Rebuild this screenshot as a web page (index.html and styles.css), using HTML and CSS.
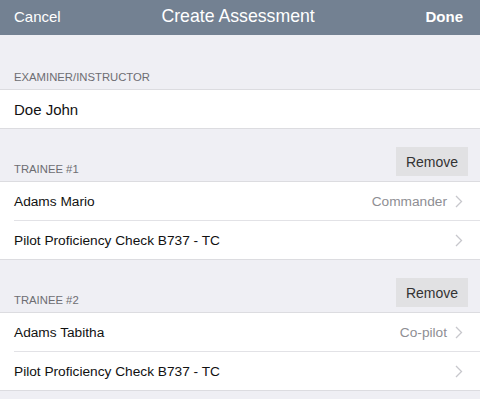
FILE: index.html
```html
<!DOCTYPE html>
<html lang="en">
<head>
    <meta charset="UTF-8">
    <meta name="viewport" content="width=device-width, initial-scale=1.0">
    <title>Create Assessment</title>
    <link rel="stylesheet" href="styles.css">
</head>
<body>
    <header class="nav-bar">
        <span class="nav-btn">Cancel</span>
        <span class="nav-title">Create Assessment</span>
        <span class="nav-btn nav-done">Done</span>
    </header>

    <section class="group">
        <div class="group-head group-head-first">
            <span class="group-label">EXAMINER/INSTRUCTOR</span>
        </div>
        <ul class="table">
            <li class="cell cell-large"><span class="cell-title">Doe John</span></li>
        </ul>
    </section>

    <section class="group">
        <div class="group-head">
            <span class="group-label">TRAINEE #1</span>
            <button class="remove-btn">Remove</button>
        </div>
        <ul class="table">
            <li class="cell">
                <span class="cell-title">Adams Mario</span>
                <span class="cell-detail">Commander</span>
                <svg class="chevron" width="8" height="13" viewBox="0 0 8 13"><path d="M1 1 L6.5 6.5 L1 12" fill="none" stroke="#c7c7cc" stroke-width="1.3"/></svg>
            </li>
            <li class="cell">
                <span class="cell-title">Pilot Proficiency Check B737 - TC</span>
                <svg class="chevron" width="8" height="13" viewBox="0 0 8 13"><path d="M1 1 L6.5 6.5 L1 12" fill="none" stroke="#c7c7cc" stroke-width="1.3"/></svg>
            </li>
        </ul>
    </section>

    <section class="group">
        <div class="group-head">
            <span class="group-label">TRAINEE #2</span>
            <button class="remove-btn">Remove</button>
        </div>
        <ul class="table">
            <li class="cell">
                <span class="cell-title">Adams Tabitha</span>
                <span class="cell-detail">Co-pilot</span>
                <svg class="chevron" width="8" height="13" viewBox="0 0 8 13"><path d="M1 1 L6.5 6.5 L1 12" fill="none" stroke="#c7c7cc" stroke-width="1.3"/></svg>
            </li>
            <li class="cell">
                <span class="cell-title">Pilot Proficiency Check B737 - TC</span>
                <svg class="chevron" width="8" height="13" viewBox="0 0 8 13"><path d="M1 1 L6.5 6.5 L1 12" fill="none" stroke="#c7c7cc" stroke-width="1.3"/></svg>
            </li>
        </ul>
    </section>
</body>
</html>
```

FILE: styles.css
```css
/* Base */
body {
    margin: 0;
    background: #efeff4;
    font-family: "Liberation Sans", Arial, sans-serif;
    color: #111;
}

/* Navigation bar */
.nav-bar {
    height: 35px;
    background: #738192;
    color: #fff;
    display: flex;
    align-items: center;
    justify-content: space-between;
    padding: 0 17px 3px 14px;
    box-sizing: border-box;
}

.nav-btn {
    font-size: 15px;
}

.nav-done {
    font-weight: bold;
}

.nav-title {
    font-size: 17.7px;
    margin-right: 10px;
}

/* Groups */
.group-head {
    height: 52px;
    display: flex;
    align-items: flex-end;
    justify-content: space-between;
    padding: 0 12px 5px 14px;
    box-sizing: border-box;
}

.group-head-first {
    height: 54px;
    padding-bottom: 6px;
}

.group-label {
    font-size: 11.3px;
    color: #6d6d72;
    padding-bottom: 1px;
}

.group-head-first .group-label {
    padding-bottom: 0;
}

.remove-btn {
    font-family: inherit;
    font-size: 14px;
    color: #333;
    background: #e1e1e3;
    border: none;
    height: 29px;
    width: 72px;
    padding: 0;
}

/* Table cells */
.table {
    list-style: none;
    margin: 0;
    padding: 0 0 0 14px;
    background: #fff;
    border-top: 1px solid #dcdce0;
    border-bottom: 1px solid #dcdce0;
}

.cell {
    height: 38px;
    display: flex;
    align-items: center;
    padding-right: 17px;
    font-size: 13.7px;
}

.cell + .cell {
    border-top: 1px solid #e2e2e6;
}

.cell-large {
    font-size: 15px;
}

.cell-title {
    flex: 1;
}

.cell-detail {
    color: #8e8e93;
    margin-right: 8px;
}

.chevron {
    display: block;
}
```
